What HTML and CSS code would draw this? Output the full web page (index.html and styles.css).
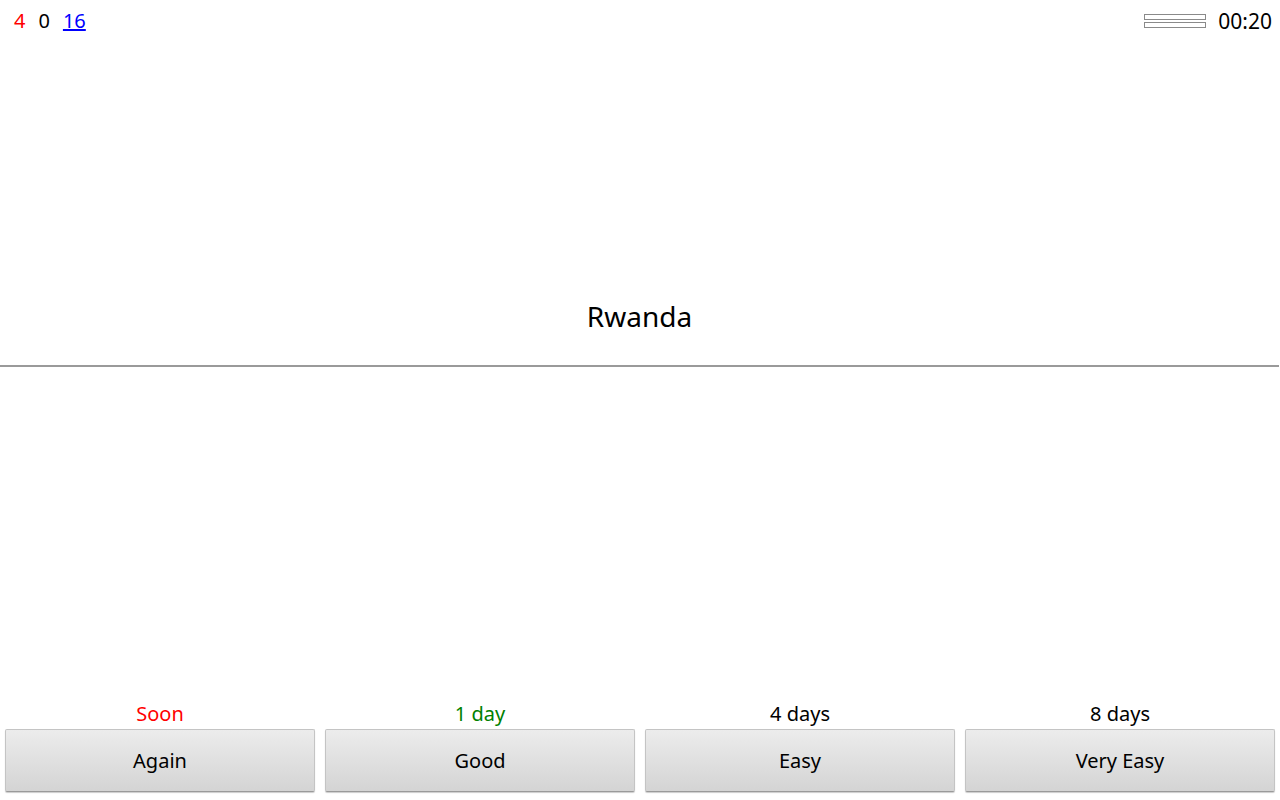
FILE: index.html
```html
<!DOCTYPE html>
<html>
<head>
<meta charset="utf-8">
<link rel="stylesheet" href="styles.css">
</head>
<body>
<div class="app">
  <header class="topbar">
    <div class="counts">
      <span class="count new">4</span>
      <span class="count learn">0</span>
      <a class="count review" href="#">16</a>
    </div>
    <div class="status">
      <div class="progress">
        <div class="bar"></div>
        <div class="bar"></div>
      </div>
      <span class="timer">00:20</span>
    </div>
  </header>
  <main class="card">
    <section class="question">
      <div class="qtext">Rwanda</div>
    </section>
    <section class="answer"></section>
  </main>
  <footer class="answers">
    <div class="choice">
      <div class="ivl soon">Soon</div>
      <button class="btn">Again</button>
    </div>
    <div class="choice">
      <div class="ivl good">1 day</div>
      <button class="btn">Good</button>
    </div>
    <div class="choice">
      <div class="ivl">4 days</div>
      <button class="btn">Easy</button>
    </div>
    <div class="choice">
      <div class="ivl">8 days</div>
      <button class="btn">Very Easy</button>
    </div>
  </footer>
</div>
</body>
</html>
```
FILE: styles.css
```css
html, body {
  margin: 0;
  padding: 0;
  background: #ffffff;
}
body {
  font-family: "Noto Sans", "Open Sans", "DejaVu Sans", sans-serif;
  color: #000;
}
.app {
  display: flex;
  flex-direction: column;
  height: 800px;
  width: 1280px;
}
.topbar {
  display: flex;
  justify-content: space-between;
  align-items: flex-start;
  height: 40px;
  padding: 7px 8px 0 14px;
  box-sizing: border-box;
}
.counts {
  display: flex;
  gap: 13px;
  font-size: 20px;
  line-height: 28px;
}
.count.new { color: #ff0000; }
.count.learn { color: #000; }
.count.review { color: #0000ff; text-decoration: underline; }
.status {
  display: flex;
  align-items: flex-start;
  gap: 12px;
}
.progress {
  display: flex;
  flex-direction: column;
  gap: 2px;
  margin-top: 7px;
}
.bar {
  width: 60px;
  height: 4px;
  border: 1px solid #8a8a8a;
  background: #fff;
}
.timer {
  font-size: 21px;
  line-height: 28px;
}
.card {
  flex: 1;
  display: flex;
  flex-direction: column;
}
.question {
  height: 325px;
  display: flex;
  flex-direction: column;
  justify-content: flex-end;
  align-items: center;
  border-bottom: 2px solid #9a9a9a;
  margin-right: 1px;
}
.qtext {
  font-size: 28px;
  line-height: 38px;
  padding-bottom: 30px;
}
.answer {
  flex: 1;
}
.answers {
  display: grid;
  grid-template-columns: repeat(4, 1fr);
  gap: 10px;
  padding: 0 5px 8px 5px;
}
.choice {
  display: flex;
  flex-direction: column;
  align-items: stretch;
}
.ivl {
  text-align: center;
  font-size: 20px;
  line-height: 26px;
  padding-bottom: 2px;
  color: #000;
}
.ivl.soon { color: #ff0000; }
.ivl.good { color: #008000; }
.btn {
  height: 63px;
  font-family: inherit;
  font-size: 20px;
  color: #000;
  background: linear-gradient(#ececec, #d4d4d4);
  border: 1px solid #c4c4c4;
  border-bottom-color: #9a9a9a;
  border-radius: 2px;
  box-shadow: 0 1px 1px rgba(0,0,0,0.2);
  padding: 0;
}
```
